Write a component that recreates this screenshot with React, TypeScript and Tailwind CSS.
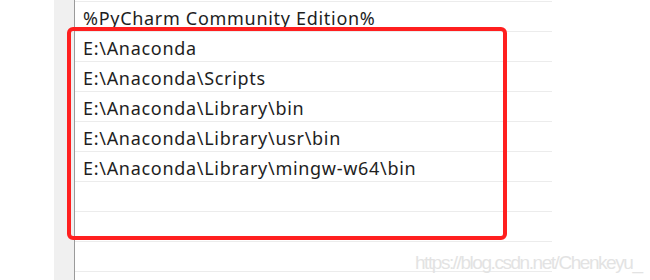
import React from "react";

const rows = [
  "%PyCharm Community Edition%",
  "E:\\Anaconda",
  "E:\\Anaconda\\Scripts",
  "E:\\Anaconda\\Library\\bin",
  "E:\\Anaconda\\Library\\usr\\bin",
  "E:\\Anaconda\\Library\\mingw-w64\\bin",
  "",
  "",
  "",
  "",
];

export default function App() {
  return (
    <div className="relative w-[650px] h-[280px] overflow-hidden bg-white flex" style={{ fontFamily: '"Noto Sans", "Open Sans", sans-serif' }}>
      <div className="w-[54px] h-full bg-white" />
      <div className="w-[20px] h-full bg-[#f0f0f0]" />
      <div className="w-px h-full bg-[#9a9a9a]" />
      <div className="w-[477px] pt-px flex flex-col">
        {rows.map((t, i) => (
          <div key={i} className="h-[30px] shrink-0 border-t border-[#ececec] pl-[8px] pt-[3px] flex items-center text-[18px] tracking-[0.7px] text-[#1e1e1e] leading-none whitespace-nowrap">
            {t}
          </div>
        ))}
      </div>
      <div className="absolute left-[67px] top-[27px] w-[440px] h-[213px] border-[4px] border-[#ff1f1f] rounded-[6px]" />
      <div className="absolute left-[415px] top-[253px] text-[19px] tracking-[-1.45px] text-[#e3e3e3] whitespace-nowrap leading-none" style={{ fontFamily: '"Liberation Sans", Arial, sans-serif' }}>
        https://blog.csdn.net/Chenkeyu_
      </div>
    </div>
  );
}
